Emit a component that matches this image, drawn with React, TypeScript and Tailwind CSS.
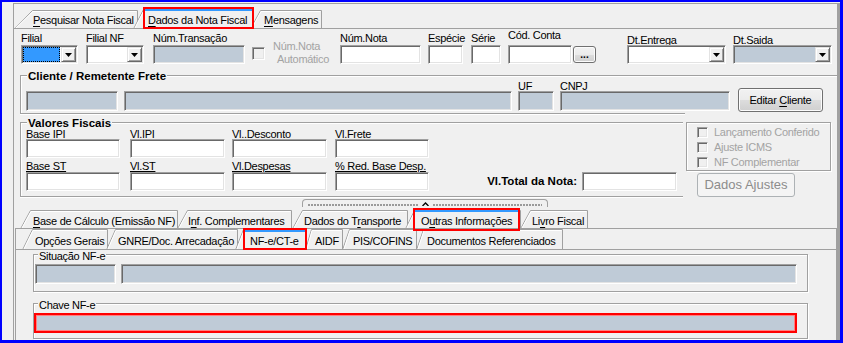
import React from "react";

const sunken =
  "border border-t-[#a0a0a0] border-l-[#a0a0a0] border-b-white border-r-white shadow-[inset_1px_1px_0_#696969,inset_-1px_-1px_0_#e3e3e3]";
const raised =
  "border border-t-[#e3e3e3] border-l-[#e3e3e3] border-b-[#696969] border-r-[#696969] shadow-[inset_1px_1px_0_#ffffff,inset_-1px_-1px_0_#a0a0a0]";
const etched = "border border-[#a0a0a0] shadow-[inset_1px_1px_0_#ffffff,1px_1px_0_#ffffff]";
const dis = "bg-[#bfcbd7]";
const win7btn =
  "border border-[#707070] rounded-[3px] bg-[linear-gradient(#f2f2f2,#ebebeb_50%,#dddddd_51%,#cfcfcf)] shadow-[inset_0_0_0_1px_#fcfcfc]";

function Hot({ text, u }: { text: string; u?: number }) {
  if (u === undefined) return <>{text}</>;
  return (
    <>
      {text.slice(0, u)}
      <span className="underline underline-offset-2">{text[u]}</span>
      {text.slice(u + 1)}
    </>
  );
}

type TabP = {
  label: string;
  u?: number;
  w: number;
  h: number;
  top: number;
  slant: number;
  pl: string;
  pb: string;
  ml?: string;
  sel?: boolean;
  red?: string;
  blue?: string;
};

function Tab(p: TabP) {
  const { label, u, w, h, top, slant, pl, pb, ml = "", sel, red = "", blue = "" } = p;
  return (
    <div className={`relative shrink-0 ${ml} ${sel ? "z-10" : ""}`}>
      <svg width={w} height={h} className="block">
        <path
          d={`M0.5 ${h + 1} L${slant + 0.5} ${top + 0.5} L${w - 0.5} ${top + 0.5} L${w - 0.5} ${h + 1}`}
          fill="#f0f0f0"
          stroke="#a0a0a0"
        />
        <path
          d={`M2 ${h} L${slant + 1} ${top + 1.5} L${w - 1.5} ${top + 1.5}`}
          fill="none"
          stroke="#ffffff"
        />
      </svg>
      {sel && <div className={`absolute h-[2px] bg-[#3399ff] ${blue}`} />}
      <span className={`absolute bottom-0 left-0 whitespace-nowrap leading-[13px] ${pl} ${pb}`}>
        <Hot text={label} u={u} />
      </span>
      {sel && <div className={`absolute border-2 border-[#ff0000] ${red}`} />}
    </div>
  );
}

function Arrow() {
  return (
    <svg width="7" height="4" className="block">
      <polygon points="0,0 7,0 3.5,4" fill="#000" />
    </svg>
  );
}

function Combo({ fill = "bg-white", focused = false }: { fill?: string; focused?: boolean }) {
  return (
    <div className={`w-full h-[19px] ${sunken} ${fill} flex p-[1px]`}>
      {focused ? (
        <div className="flex-1 bg-[#3399ff] border border-dotted border-black" />
      ) : (
        <div className="flex-1" />
      )}
      <div className={`ml-[1px] w-[15px] h-full bg-[#f0f0f0] ${raised} flex items-center justify-center`}>
        <Arrow />
      </div>
    </div>
  );
}

function Field({
  label,
  cls,
  lcls = "h-[14px] leading-[14px]",
  children,
}: {
  label: React.ReactNode;
  cls: string;
  lcls?: string;
  children: React.ReactNode;
}) {
  return (
    <div className={`flex flex-col shrink-0 ${cls}`}>
      <div className={`whitespace-nowrap ${lcls}`}>{label}</div>
      {children}
    </div>
  );
}

function Check({ size = "w-[11px] h-[11px]" }: { size?: string }) {
  return <div className={`${size} shrink-0 ${sunken} bg-[#f0f0f0]`} />;
}

function VCol({ label, cls, lcls }: { label: string; cls: string; lcls: string }) {
  return (
    <div className={`flex flex-col shrink-0 ${cls}`}>
      <div className={`whitespace-nowrap underline underline-offset-[1px] ${lcls}`}>{label}</div>
      <div className={`h-[19px] bg-white ${sunken}`} />
    </div>
  );
}

const dots =
  "flex-1 h-[2px] bg-[repeating-linear-gradient(90deg,#9a9a9a_0px,#9a9a9a_2px,transparent_2px,transparent_3px)]";

export default function App() {
  return (
    <div className="w-[843px] h-[343px] bg-[#0000ff] pl-[2px] pt-[2px] pr-[3px] pb-[3px] font-['Liberation_Sans',Arial,sans-serif] text-[11px] tracking-[-0.3px] text-black overflow-hidden">
      <div className="w-full h-full bg-[#f0f0f0] pl-[11px] pt-[1px] flex flex-col overflow-hidden">
        <div className="flex-1 border-l border-t border-r-[3px] border-[#a0a0a0] flex flex-col">
          {/* top tabs */}
          <div className="flex items-end h-[24px] shrink-0">
            <Tab label="Pesquisar Nota Fiscal" u={0} w={124} h={20} top={2} slant={18} pl="pl-[19px]" pb="pb-[1px]" />
            <Tab
              label="Dados da Nota Fiscal"
              u={0}
              w={121}
              h={20}
              top={1}
              slant={10}
              pl="pl-[15px]"
              pb="pb-[1px]"
              ml="-ml-[5px]"
              sel
              red="-top-[1px] -bottom-[1px] left-[10px] right-0"
              blue="top-[1px] left-[12px] right-[2px]"
            />
            <Tab label="Mensagens" u={0} w={72} h={20} top={2} slant={10} pl="pl-[14px]" pb="pb-[1px]" ml="-ml-[4px]" />
          </div>

          {/* page */}
          <div className="flex-1 border-t border-[#a0a0a0] flex flex-col">
            {/* row 1 */}
            <div className="flex mt-[2px] h-[33px] shrink-0">
              <Field label="Filial" cls="ml-[7px] w-[57px]">
                <Combo focused />
              </Field>
              <Field label="Filial NF" cls="ml-[8px] w-[58px]">
                <Combo />
              </Field>
              <Field label="Núm.Transação" cls="ml-[9px] w-[92px]">
                <div className={`h-[19px] ${sunken} ${dis}`} />
              </Field>
              <div className="ml-[7px] w-[78px] flex shrink-0">
                <div className="mt-[16px]">
                  <Check size="w-[13px] h-[13px]" />
                </div>
                <div className="mt-[9px] ml-[8px] leading-[12.5px] text-[#a3a3a3] whitespace-nowrap">
                  <div>Núm.Nota</div>
                  <div className="pl-[4px]">Automático</div>
                </div>
              </div>
              <Field label="Núm.Nota" cls="ml-[10px] w-[81px]">
                <div className={`h-[19px] bg-white ${sunken}`} />
              </Field>
              <Field label="Espécie" cls="ml-[7px] w-[35px]">
                <div className={`h-[19px] bg-white ${sunken}`} />
              </Field>
              <Field label="Série" cls="ml-[8px] w-[30px]">
                <div className={`h-[19px] bg-white ${sunken}`} />
              </Field>
              <Field label="Cód. Conta" cls="ml-[7px] w-[64px]" lcls="-mt-[3px] h-[17px] leading-[14px]">
                <div className={`h-[19px] bg-white ${sunken}`} />
              </Field>
              <div
                className={`self-end mb-[1px] ml-[1px] w-[23px] h-[17px] ${win7btn} flex items-end justify-center pb-[2px] font-bold leading-none tracking-[0px] text-[10px] shrink-0`}
              >
                ...
              </div>
              <Field
                label={<span className="underline underline-offset-[1px]">Dt.Entrega</span>}
                cls="ml-[31px] w-[99px]"
                lcls="h-[14px] leading-[18px]"
              >
                <Combo />
              </Field>
              <Field
                label={<span className="underline underline-offset-[1px]">Dt.Saida</span>}
                cls="ml-[7px] w-[99px]"
                lcls="h-[14px] leading-[18px]"
              >
                <Combo fill={dis} />
              </Field>
            </div>

            {/* Cliente group */}
            <div className="relative ml-[6px] mt-[11px] border-t border-l border-[#a0a0a0] shadow-[inset_1px_1px_0_#ffffff] flex flex-col shrink-0">
              <span className="absolute -top-[7px] left-[6px] px-[1px] bg-[#f0f0f0] font-bold text-[11.5px] leading-[14px] tracking-[0px] whitespace-nowrap">
                Cliente / Remetente Frete
              </span>
              <div className="flex items-end pt-[3px]">
                <div className={`ml-[5px] w-[92px] h-[20px] ${sunken} ${dis}`} />
                <div className={`ml-[6px] w-[388px] h-[20px] ${sunken} ${dis}`} />
                <div className="ml-[6px] w-[36px] flex flex-col">
                  <div className="h-[12px] leading-[14px]">UF</div>
                  <div className={`h-[20px] ${sunken} ${dis}`} />
                </div>
                <div className="ml-[6px] w-[170px] flex flex-col">
                  <div className="h-[12px] leading-[14px]">CNPJ</div>
                  <div className={`h-[20px] ${sunken} ${dis}`} />
                </div>
                <div
                  className={`ml-[8px] -mb-[1px] w-[85px] h-[24px] ${win7btn} flex items-center justify-center whitespace-nowrap`}
                >
                  <span>
                    Editar <Hot text="Cliente" u={0} />
                  </span>
                </div>
              </div>
              <div className="mt-[2px] -ml-[1px] w-[665px] h-[2px] border-t border-[#a0a0a0] bg-white" />
            </div>

            {/* Valores + right column */}
            <div className="flex mt-[7px] ml-[6px] shrink-0">
              <div className="relative w-[663px] border-t border-l border-b border-[#a0a0a0] shadow-[inset_1px_1px_0_#ffffff,0_1px_0_#ffffff] pt-[4px] pb-[3px]">
                <span className="absolute -top-[7px] left-[6px] px-[1px] bg-[#f0f0f0] font-bold text-[11.5px] leading-[14px] tracking-[0px] whitespace-nowrap">
                  Valores Fiscais
                </span>
                <div className="flex">
                  <VCol label="Base IPI" cls="ml-[5px] w-[94px]" lcls="h-[12px] leading-[14px]" />
                  <VCol label="Vl.IPI" cls="ml-[10px] w-[95px]" lcls="h-[12px] leading-[14px]" />
                  <VCol label="Vl..Desconto" cls="ml-[7px] w-[95px]" lcls="h-[12px] leading-[14px]" />
                  <VCol label="Vl.Frete" cls="ml-[8px] w-[94px]" lcls="h-[12px] leading-[14px]" />
                </div>
                <div className="flex">
                  <VCol label="Base ST" cls="ml-[5px] w-[94px]" lcls="h-[14px] leading-[16px]" />
                  <VCol label="Vl.ST" cls="ml-[10px] w-[95px]" lcls="h-[14px] leading-[16px]" />
                  <VCol label="Vl.Despesas" cls="ml-[7px] w-[95px]" lcls="h-[14px] leading-[16px]" />
                  <VCol label="% Red. Base Desp." cls="ml-[8px] w-[94px]" lcls="h-[14px] leading-[16px]" />
                  <div className="self-end ml-auto mr-[6px] flex items-center">
                    <span className="font-bold text-[11.5px] tracking-[0px] whitespace-nowrap">Vl.Total da Nota:</span>
                    <div className={`ml-[5px] w-[95px] h-[19px] bg-white ${sunken}`} />
                  </div>
                </div>
              </div>

              <div className="ml-[3px] flex flex-col">
                <div className={`w-[145px] h-[49px] ${etched} pt-[2px] pl-[10px]`}>
                  {["Lançamento Conferido", "Ajuste ICMS", "NF Complementar"].map((t) => (
                    <div key={t} className="flex items-center h-[15px]">
                      <Check />
                      <span className="ml-[6px] text-[#a3a3a3] whitespace-nowrap leading-[13px]">{t}</span>
                    </div>
                  ))}
                </div>
                <div className="mt-[2px] ml-[11px] w-[98px] h-[24px] border border-[#adb2b5] rounded-[3px] bg-[#f4f4f4] text-[#8c8c8c] text-[13px] tracking-[0px] flex items-center justify-center whitespace-nowrap">
                  Dados Ajustes
                </div>
              </div>
            </div>

            {/* splitter */}
            <div className="mt-[2px] ml-[288px] w-[246px] h-[8px] border-t border-l border-r border-[#a0a0a0] rounded-t-[4px] flex items-end gap-[4px] px-[5px] pb-[1px] shrink-0">
              <div className={dots} />
              <svg width="7" height="4" className="block">
                <path d="M0.5 4 L3.5 1 L6.5 4" fill="none" stroke="#000" strokeWidth="1.3" />
              </svg>
              <div className={dots} />
            </div>

            {/* lower tab control */}
            <div className="ml-[1px] flex-1 flex flex-col">
              <div className="flex items-end h-[21px] pl-[5px] shrink-0">
                <Tab label="Base de Cálculo (Emissão NF)" u={0} w={158} h={18} top={0} slant={10} pl="pl-[13px]" pb="pb-0" />
                <Tab label="Inf. Complementares" u={1} w={115} h={18} top={0} slant={10} pl="pl-[11px]" pb="pb-0" ml="-ml-[1px]" />
                <Tab label="Dados do Transporte" u={10} w={116} h={18} top={0} slant={10} pl="pl-[12px]" pb="pb-0" />
                <Tab
                  label="Outras Informações"
                  u={1}
                  w={116}
                  h={18}
                  top={0}
                  slant={9}
                  pl="pl-[16px]"
                  pb="pb-0"
                  ml="-ml-[3px]"
                  sel
                  red="-top-[2px] -bottom-[3px] left-[8px] right-[1px]"
                  blue="top-0 left-[10px] right-[3px]"
                />
                <Tab label="Livro Fiscal" u={2} w={68} h={18} top={0} slant={10} pl="pl-[12px]" pb="pb-0" ml="-ml-[1px]" />
              </div>
              <div className="flex-1 border-t border-l border-r border-[#a0a0a0] flex flex-col">
                <div className="flex items-end h-[20px] pl-[6px] shrink-0">
                  <Tab label="Opções Gerais" w={86} h={20} top={0} slant={10} pl="pl-[13px]" pb="pb-[1px]" />
                  <Tab label="GNRE/Doc. Arrecadação" w={132} h={20} top={0} slant={9} pl="pl-[12px]" pb="pb-[1px]" ml="-ml-[2px]" />
                  <Tab
                    label="NF-e/CT-e"
                    w={72}
                    h={20}
                    top={0}
                    slant={8}
                    pl="pl-[15px]"
                    pb="pb-[1px]"
                    ml="-ml-[3px]"
                    sel
                    red="-top-[1px] -bottom-[1px] left-[8px] right-0"
                    blue="top-[1px] left-[10px] right-[2px]"
                  />
                  <Tab label="AIDF" w={38} h={20} top={0} slant={6} pl="pl-[10px]" pb="pb-[1px]" ml="-ml-[2px]" />
                  <Tab label="PIS/COFINS" w={75} h={20} top={0} slant={7} pl="pl-[11px]" pb="pb-[1px]" ml="-ml-[1px]" />
                  <Tab label="Documentos Referenciados" w={147} h={20} top={0} slant={7} pl="pl-[11px]" pb="pb-[1px]" ml="-ml-[1px]" />
                </div>
                <div className="flex-1 border-t border-[#a0a0a0] flex flex-col">
                  <div className={`relative mt-[4px] ml-[17px] w-[775px] ${etched} pt-[9px] pb-[7px] flex shrink-0`}>
                    <span className="absolute -top-[5px] left-[4px] px-[1px] bg-[#f0f0f0] leading-[13px] whitespace-nowrap">
                      Situação NF-e
                    </span>
                    <div className={`ml-[1px] w-[81px] h-[20px] ${sunken} ${dis}`} />
                    <div className={`ml-[5px] w-[676px] h-[20px] ${sunken} ${dis}`} />
                  </div>
                  <div className={`relative mt-[11px] ml-[17px] w-[775px] ${etched} pt-[9px] pb-[5px] flex shrink-0`}>
                    <span className="absolute -top-[5px] left-[4px] px-[1px] bg-[#f0f0f0] leading-[13px] whitespace-nowrap">
                      Chave NF-e
                    </span>
                    <div className={`w-[763px] h-[20px] border-2 border-[#ff0000] ${dis} shadow-[inset_0_0_0_1px_#ff8080]`} />
                  </div>
                </div>
              </div>
            </div>
          </div>
        </div>
      </div>
    </div>
  );
}
